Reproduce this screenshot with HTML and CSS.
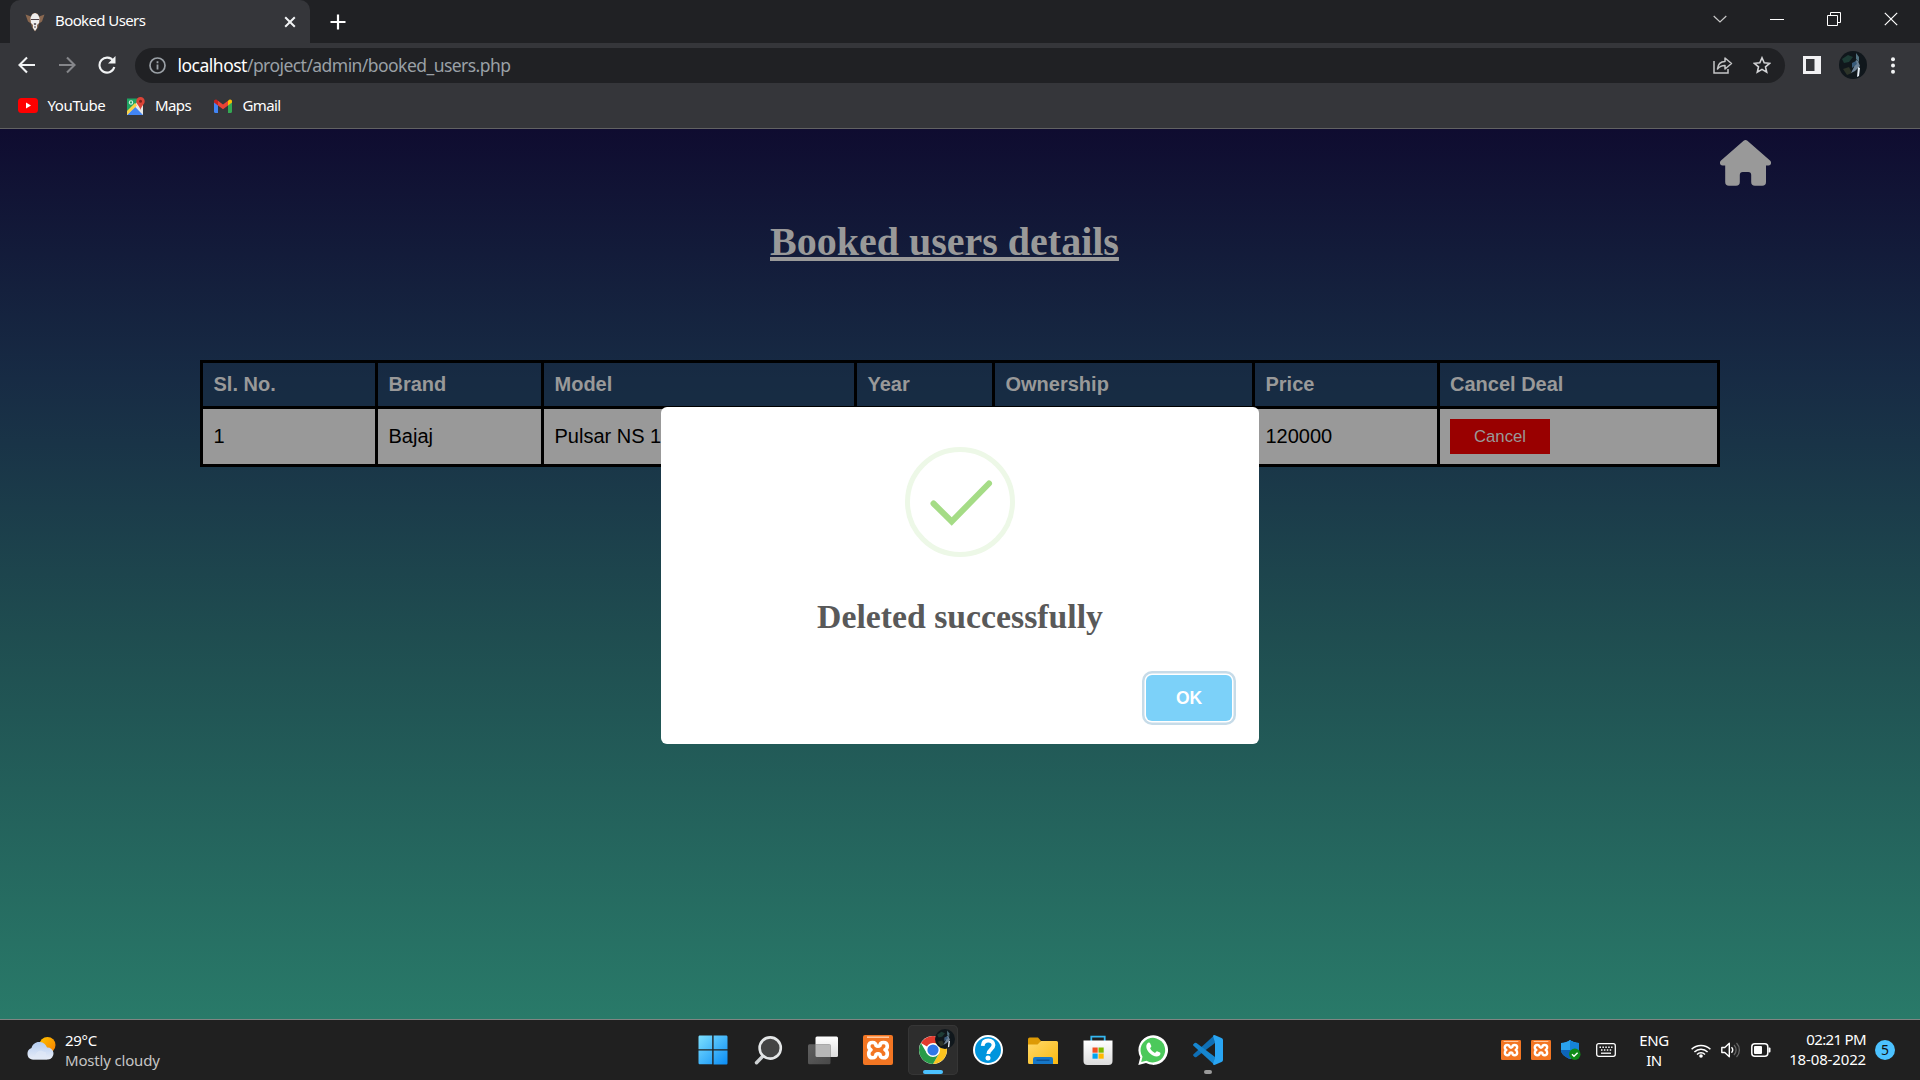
FILE: index.html
```html
<!DOCTYPE html>
<html lang="en">
<head>
<meta charset="utf-8">
<title>Booked Users</title>
<link rel="stylesheet" href="styles.css">
</head>
<body>
<svg width="0" height="0" class="defs">
  <defs>
    <linearGradient id="win" x1="0" y1="0" x2="1" y2="1"><stop offset="0" stop-color="#7de0ff"/><stop offset="1" stop-color="#0a8cf5"/></linearGradient>
    <linearGradient id="fold" x1="0" y1="0" x2="1" y2="1"><stop offset="0" stop-color="#ffd96a"/><stop offset="1" stop-color="#fbb911"/></linearGradient>
    <linearGradient id="cloud" x1="0" y1="0" x2="0" y2="1"><stop offset="0" stop-color="#b4cdf2"/><stop offset="1" stop-color="#e8edf7"/></linearGradient>
    <linearGradient id="sun" x1="0" y1="0" x2="1" y2="1"><stop offset="0" stop-color="#ffc400"/><stop offset="1" stop-color="#f57c00"/></linearGradient>
    <linearGradient id="grey" x1="0" y1="0" x2="1" y2="1"><stop offset="0" stop-color="#606060"/><stop offset="1" stop-color="#484848"/></linearGradient>
    <linearGradient id="light" x1="0" y1="0" x2="0" y2="1"><stop offset="0" stop-color="#fff"/><stop offset="1" stop-color="#dcdcdc"/></linearGradient>
    <symbol id="xampp" viewBox="0 0 30 30">
      <rect width="30" height="30" rx="2" fill="#f37623"/>
      <path d="M4 2.2h22" stroke="#ffc69c" stroke-width="1.6"/>
      <path d="M9.500 7.500C5 7.500 4.500 13 8 14.800C4.500 17 5 22.800 9.500 22.800C12 22.800 13 21 13 19.500C14 18.600 16 18.600 17 19.500C17 21 18 22.800 20.500 22.800C25 22.800 25.500 17 22 14.800C25.500 13 25 7.500 20.500 7.500C18 7.500 17 9 17 10.500C16 11.500 14 11.500 13 10.500C13 9 12 7.500 9.500 7.500Z" fill="none" stroke="#fff" stroke-width="3.600" stroke-linejoin="round"/>
    </symbol>
    <symbol id="avatar" viewBox="0 0 28 28">
      <circle cx="14" cy="14" r="14" fill="#10171c"/>
      <path d="M3 8l6-4 5 2-4 5-5 1z" fill="#1d3b35"/>
      <path d="M4 18l6-2 3 6-5 2z" fill="#2c3328"/>
      <path d="M17 2l3 4 0 5-3-3z" fill="#52717f"/>
      <path d="M17 9l2 1 2 5-2 2-3 3-4 2 3-6z" fill="#6d8297"/>
      <path d="M19 16l2 1-1 8-2 1z" fill="#e4edf5"/>
      <path d="M13 12l4-2 1 3-5 4z" fill="#385a7a"/>
    </symbol>
  </defs>
</svg>
<div class="screen">
  <header class="browser">
    <div class="tabstrip">
      <div class="tab">
        <svg class="favicon" viewBox="0 0 20 20"><path d="M.5 2.500L6 4.500 8 1h4l2 3.500 5.500-2L17 9.500l-3 2-1 4-3 4-3-4-1-4-3-2z" fill="#8a6850"/><path d="M7 2.500L10 1l3 1.500 1.500 3.500-.5 5-2 2v3l-2 3-2-3v-3l-2-2-.5-5z" fill="#efeeee"/><path d="M6 7.500h8M9 11.500l1 1 1-1M9 15h2" fill="none" stroke="#4c4147" stroke-width="1.200"/></svg>
        <span class="tab-title">Booked Users</span>
        <svg class="tab-close" viewBox="0 0 12 12"><path d="M1.200 1.200l9.600 9.600M10.800 1.200L1.200 10.800" stroke="#f1f3f4" stroke-width="2"/></svg>
      </div>
      <svg class="newtab" viewBox="0 0 16 16"><path d="M8 .5v15M.5 8h15" stroke="#fff" stroke-width="2.200"/></svg>
      <div class="window-buttons">
        <svg viewBox="0 0 14 14"><path d="M.7 4l6.300 6 6.300-6" fill="none" stroke="#c8c8c8" stroke-width="1.200"/></svg>
        <svg viewBox="0 0 14 14"><path d="M0 7.500h14" stroke="#fff"/></svg>
        <svg viewBox="0 0 14 14"><path d="M.5 3.500h10v10h-10zM3.500 3V.5h10v10h-2.500" fill="none" stroke="#fff"/></svg>
        <svg viewBox="0 0 14 14"><path d="M.8.8l12.400 12.400M13.200.8L.8 13.200" stroke="#fff" stroke-width="1.200"/></svg>
      </div>
    </div>
    <div class="toolbar">
      <svg class="nav" viewBox="0 0 18 18"><path d="M17 9H2M9 1.500L1.500 9 9 16.500" fill="none" stroke="#f1f3f4" stroke-width="2.100"/></svg>
      <svg class="nav" viewBox="0 0 18 18"><path d="M1 9h15M9 1.500L16.500 9 9 16.500" fill="none" stroke="#85868a" stroke-width="2.100"/></svg>
      <svg class="nav" viewBox="0 0 18 18"><path d="M15.300 5A7.500 7.500 0 1 0 16.300 11" fill="none" stroke="#f1f3f4" stroke-width="2.100"/><path d="M17.500 0v7.500H10z" fill="#f1f3f4"/></svg>
      <div class="omnibox">
        <svg class="info" viewBox="0 0 17 17"><circle cx="8.500" cy="8.500" r="7.500" fill="none" stroke="#9aa0a6" stroke-width="1.700"/><path d="M8.500 7.500v5M8.500 4.300v2" stroke="#9aa0a6" stroke-width="1.800"/></svg>
        <div class="url"><span class="host">localhost</span><span class="path">/project/admin/booked_users.php</span></div>
        <svg class="share" viewBox="0 0 20 18"><path d="M1 5v12h14v-4" fill="none" stroke="#c4c5c6" stroke-width="1.500"/><path d="M4.500 13C5 8 8 5.500 12 5.500V2l6.500 5.500L12 13V9.500C8.500 9.500 6 11 4.500 13z" fill="none" stroke="#c4c5c6" stroke-width="1.500" stroke-linejoin="round"/></svg>
        <svg class="star" viewBox="0 0 18 18"><path d="M9 1.800l2.200 5 5.400.5-4.100 3.600 1.200 5.300L9 13.400l-4.700 2.800 1.200-5.300L1.400 7.300l5.400-.5z" fill="none" stroke="#d3d4d6" stroke-width="1.600"/></svg>
      </div>
      <svg class="panel" viewBox="0 0 18 18"><path d="M0 0h18v18H0zM3 3v12h8.500V3z" fill="#f1f1f3" fill-rule="evenodd"/></svg>
      <svg class="face"><use href="#avatar"/></svg>
      <svg class="dots" viewBox="0 0 4 17"><g fill="#f1f3f4"><circle cx="2" cy="2.200" r="2"/><circle cx="2" cy="8.500" r="2"/><circle cx="2" cy="14.800" r="2"/></g></svg>
    </div>
    <nav class="bookmarks">
      <svg class="yt" viewBox="0 0 20 15"><rect width="20" height="15" rx="3.500" fill="red"/><path d="M8 4.500l5 3-5 3z" fill="#fff"/></svg>
      <span class="b-yt">YouTube</span>
      <svg class="maps" viewBox="0 0 18 18"><rect y="1.500" width="16" height="16.500" fill="#1fa463"/><path d="M0 18V15L14 1.500h2V18z" fill="#e8e8e6"/><path d="M0 18L8 9.800 16 18z" fill="#4285f4"/><path d="M0 18v-4L8 6l2 2.500z" fill="#fbd147"/><path d="M13.500 0a4.300 4.300 0 0 1 4.200 4.500C17.700 7.300 14.300 9 13.500 13 12.700 9 9.300 7.300 9.300 4.500A4.300 4.300 0 0 1 13.500 0z" fill="#db4437"/><circle cx="13.500" cy="4.300" r="1.500" fill="#7b231d"/><circle cx="4" cy="5.500" r="1.700" fill="none" stroke="#d8efdf" stroke-width="1.100"/></svg>
      <span class="b-maps">Maps</span>
      <svg class="gmail" viewBox="0 0 18 14"><path d="M0 2v10.800c0 .7.500 1.200 1.200 1.200H4V6z" fill="#4285f4"/><path d="M18 2v10.800c0 .7-.5 1.200-1.200 1.200H14V6z" fill="#34a853"/><path d="M4 1.800l5 3.700 5-3.700v4.700l-5 3.700-5-3.700z" fill="#ea4335"/><path d="M14 1.800l1-.8c1.300-1 3-.2 3 1.300v1.200l-4 3z" fill="#fbbc04"/><path d="M4 1.800L3 1C1.700 0 0 .8 0 2.300v1.200l4 3z" fill="#c5221f"/></svg>
      <span class="b-gmail">Gmail</span>
    </nav>
  </header>

  <main class="page">
    <svg class="home" viewBox="0 0 51 46"><path d="M23.600.8a3 3 0 0 1 3.800 0L50 20.500c2 2 1 5-1.500 5H46V42a3.800 3.800 0 0 1-3.800 3.800H35a3.800 3.800 0 0 1-3.800-3.800v-7a3 3 0 0 0-3-3h-5.400a3 3 0 0 0-3 3v7a3.800 3.800 0 0 1-3.800 3.800H9A3.800 3.800 0 0 1 5.200 42V25.500H2.500C0 25.500-1 22.500 1 20.500z" fill="#999"/></svg>
    <h1>Booked users details</h1>
    <div class="table">
      <div class="row head"><div>Sl. No.</div><div>Brand</div><div>Model</div><div>Year</div><div>Ownership</div><div>Price</div><div>Cancel Deal</div></div>
      <div class="row data"><div>1</div><div>Bajaj</div><div>Pulsar NS 1</div><div></div><div></div><div>120000</div><div><button class="cancel">Cancel</button></div></div>
    </div>
    <section class="modal">
      <svg class="success" viewBox="0 0 110 110"><circle cx="55" cy="55" r="52.500" fill="none" stroke="#edf8e7" stroke-width="5"/><path d="M28.500 56.500L46.700 74.500 84 36.500" fill="none" stroke="#a5dc86" stroke-width="6" stroke-linecap="round"/></svg>
      <h2>Deleted successfully</h2>
      <button class="ok">OK</button>
    </section>
  </main>

  <footer class="taskbar">
    <div class="weather">
      <svg viewBox="0 0 30 23"><circle cx="21.500" cy="8" r="8" fill="url(#sun)"/><path d="M6 22.500a6 6 0 0 1-.5-11.500C6.500 7 10 4.500 14 5c3.500.3 6 2.500 7 5.500a6 6 0 0 1 1 12z" fill="url(#cloud)"/><path d="M6 22.500c4 0 2-9 9-9l5 2 1 7z" fill="#dfe8f6" opacity=".7"/></svg>
      <div><div class="temp">29°C</div><div class="sky">Mostly cloudy</div></div>
    </div>
    <div class="apps">
      <div class="app"><svg viewBox="0 0 30 30"><path d="M.5 2C.5 1 1 .5 2 .5h12.200v13.700H.5zM15.600.5H28c1 0 1.500.5 1.500 1.500v12.200H15.600zM.5 15.600h13.700v13.700H2c-1 0-1.500-.5-1.500-1.500zM15.600 15.600h13.900V28c0 1-.5 1.500-1.500 1.500H15.600z" fill="url(#win)"/></svg></div>
      <div class="app"><svg viewBox="0 0 30 30"><path d="M10.500 20.500L3.500 27.700" stroke="#cfd2d4" stroke-width="3.400" stroke-linecap="round"/><circle cx="17.200" cy="13" r="10.600" fill="#444" stroke="#e4e6e7" stroke-width="2.600"/></svg></div>
      <div class="app"><svg viewBox="0 0 30 30"><rect x="7.500" y="1.500" width="22.500" height="20.500" rx="1.500" fill="url(#light)"/><rect x="0" y="9.300" width="22.500" height="20" rx="1.500" fill="url(#grey)"/><path d="M7.500 9.300h15V22h-13.500q-1.500 0-1.500-1.500z" fill="#b8b8b8"/></svg></div>
      <div class="app"><svg><use href="#xampp"/></svg></div>
      <div class="app active"><svg class="chrome" viewBox="0 0 28 28"><circle cx="14" cy="14" r="14" fill="#fff"/><path d="M14 14L1.900 7A14 14 0 0 1 26.100 7z" fill="#e33b2e"/><path d="M14 7h12.100A14 14 0 0 1 14 28l6-10.500z" fill="#fcc31e"/><path d="M1.900 7A14 14 0 0 0 14 28l6-10.500H8z" fill="#289b48"/><circle cx="14" cy="14" r="7" fill="#fff"/><circle cx="14" cy="14" r="5.600" fill="#2f77e8"/></svg><svg class="badge" viewBox="0 0 28 28"><use href="#avatar"/></svg><i></i></div>
      <div class="app"><svg viewBox="0 0 30 30"><circle cx="15" cy="15" r="14" fill="#0095dd" stroke="#fff" stroke-width="2"/><path d="M9.700 10.800c.2-3.600 2.500-5.300 5.600-5.300 3.200 0 5.200 1.800 5.200 4.600 0 4.300-5.200 4.300-5.200 9" fill="none" stroke="#fff" stroke-width="3.800"/><circle cx="15" cy="23" r="2.500" fill="#fff"/></svg></div>
      <div class="app"><svg viewBox="0 0 30 30"><path d="M0 4.200Q0 2.500 1.700 2.500H10l3 3.500-2 4H0z" fill="#dd9a05"/><path d="M0 9.500h9.500L13 6h15.500Q30 6 30 7.500V29H1.500Q0 29 0 27.500z" fill="url(#fold)"/><path d="M5 29v-5q0-2 2-2h16q2 0 2 2v5z" fill="#1677c8"/><path d="M8.500 25.200h13" stroke="#0a4a8a" stroke-width="1.200"/></svg></div>
      <div class="app"><svg viewBox="0 0 30 30"><path d="M8.300 7V1.700h13.400V7" fill="none" stroke="#35b8f1" stroke-width="1.800"/><path d="M.5 5.500h29V26q0 4-4 4h-21q-4 0-4-4z" fill="url(#light)"/><path d="M9.500 12.500h5.200v5.200H9.500z" fill="#f25022"/><path d="M15.500 12.500h5.200v5.200h-5.200z" fill="#7fba00"/><path d="M9.500 18.500h5.200v5.200H9.500z" fill="#00a4ef"/><path d="M15.500 18.500h5.200v5.200h-5.200z" fill="#ffb900"/></svg></div>
      <div class="app"><svg viewBox="0 0 30 30"><path d="M.3 30l2-7.700A14.800 14.800 0 1 1 8 28z" fill="#fff"/><path d="M3.200 27l1.300-5.200a12.300 12.300 0 1 1 4 3.900z" fill="#4bc95b"/><path d="M9.500 8.300c.8-1 2.200-1 2.600 0l1.200 2.800c.2.800-1 1.800-1.200 2.200 1 2.200 2.700 3.700 4.900 4.600.7-.4 1.300-1.900 2.100-1.700l2.900 1.400c.8.500.4 2.200-.5 3-3 2.300-7 .3-9.700-2.300-2.700-2.700-5-6.900-2.300-10z" fill="#fff"/></svg></div>
      <div class="app idle"><svg viewBox="0 0 30 30"><path d="M22 8L3.500 22Q2.500 22.700 1.600 22L.4 20.800Q-.3 20 .5 19.200L21 .5z" fill="#0f6fb5"/><path d="M22 22L3.500 8Q2.500 7.300 1.600 8L.4 9.200Q-.3 10 .5 10.800L21 29.500z" fill="#1686d0"/><path d="M21.500 0L28.500 3Q30 3.700 30 5v20q0 1.300-1.500 2L21.500 30q-1 0-1.500-.8L22 22V8L20 .8Q20.500 0 21.500 0z" fill="#29a5f3"/></svg><i></i></div>
    </div>
    <div class="tray">
      <svg class="t20"><use href="#xampp"/></svg>
      <svg class="t20"><use href="#xampp"/></svg>
      <svg class="t20" viewBox="0 0 20 20"><path d="M9 0Q12 2.500 18 3v7c0 4-4 7-9 9-5-2-9-5-9-9V3Q6 2.500 9 0z" fill="#1b8fe0"/><path d="M9 0Q12 2.500 18 3v7H0V3Q6 2.500 9 0z" fill="#2aa3ee"/><path d="M9 0Q12 2.500 18 3v7H9z" fill="#1583d8"/><path d="M0 10h9v9c-5-2-9-5-9-9z" fill="#0e64b8"/><circle cx="13.800" cy="14.300" r="5.700" fill="#0f8a17"/><path d="M11 14.300l2 2 3.600-3.600" fill="none" stroke="#fff" stroke-width="1.400"/></svg>
      <svg class="kbd" viewBox="0 0 20 14"><rect x=".7" y=".7" width="18.600" height="12.600" rx="2" fill="none" stroke="#fff" stroke-width="1.300"/><path d="M3.500 4.300h13M5 7h11" stroke="#fff" stroke-width="1.400" stroke-dasharray="1.500 1.400"/><path d="M5 10.200h10" stroke="#fff" stroke-width="1.300"/></svg>
      <div class="lang">ENG<br>IN</div>
      <svg class="wifi" viewBox="0 0 20 15"><g fill="none" stroke="#fff" stroke-width="1.500"><path d="M.6 6.300a13.300 13.300 0 0 1 18.800 0M3.400 9a9.300 9.300 0 0 1 13.200 0M6 11.500a5.600 5.600 0 0 1 8 0"/></g><circle cx="10" cy="13" r="1.800" fill="#fff"/></svg>
      <svg class="vol" viewBox="0 0 20 16"><path d="M.8 5.500h3L8.300 1.300v13.400L3.800 10.500h-3z" fill="none" stroke="#fff" stroke-width="1.400" stroke-linejoin="round"/><path d="M10.500 5.300a4 4 0 0 1 0 5.400" fill="none" stroke="#fff" stroke-width="1.400"/><path d="M13 3a7 7 0 0 1 0 10M15.500 1a10 10 0 0 1 0 14" fill="none" stroke="#666" stroke-width="1.300"/></svg>
      <svg class="bat" viewBox="0 0 20 14"><rect x=".8" y=".8" width="16" height="12.400" rx="3" fill="none" stroke="#fff" stroke-width="1.500"/><rect x="3" y="3" width="8" height="8" rx="1" fill="#fff"/><path d="M17.500 4.500h1q1 0 1 1v3q0 1-1 1h-1z" fill="#fff"/></svg>
      <div class="clock"><span class="time">02:21 PM</span><br><span class="date">18-08-2022</span></div>
      <div class="count">5</div>
    </div>
  </footer>
</div>
</body>
</html>
```
FILE: styles.css
```css
* { box-sizing: border-box; }
body { margin: 0; font-family: "Noto Sans", sans-serif; overflow: hidden; }
svg { display: block; flex: none; }
.defs { position: absolute; }
.screen { width: 1920px; height: 1080px; display: flex; flex-direction: column; }

.browser { height: 129px; background: #35363a; border-bottom: 1px solid #626262; color: #fff; }
.tabstrip { height: 43px; background: #202124; display: flex; align-items: center; padding-left: 10px; }
.tab { width: 300px; height: 43px; background: #35363a; border-radius: 10px 10px 0 0; display: flex; align-items: center; padding: 0 14px 0 15px; font-size: 15px; }
.favicon { width: 20px; height: 20px; margin-right: 10px; }
.tab-title { flex: 1; letter-spacing: -.6px; line-height: 20px; padding-bottom: 4px; }
.tab-close { width: 12px; height: 12px; }
.newtab { width: 16px; height: 16px; margin-left: 19.500px; }
.window-buttons { margin-left: auto; display: flex; gap: 43px; padding-right: 22px; margin-top: -6px; }
.window-buttons svg { width: 14px; height: 14px; }

.toolbar { height: 44px; display: flex; align-items: center; padding: 0 24px 0 18px; }
.nav { width: 18px; height: 18px; margin-right: 22px; }
.omnibox { width: 1650px; height: 35px; margin-left: -3px; background: #202124; border-radius: 18px; display: flex; align-items: center; padding: 0 14px; }
.info { width: 17px; height: 17px; margin-right: 11.500px; }
.url { flex: 1; font-size: 17.500px; line-height: 24px; white-space: nowrap; }
.host { letter-spacing: -.5px; }
.path { color: #9aa0a6; letter-spacing: -.55px; }
.share { width: 20px; height: 18px; margin-right: 20px; }
.star { width: 18px; height: 18px; }
.panel { width: 18px; height: 18px; margin-left: 18px; }
.face { width: 28px; height: 28px; margin-left: 18px; }
.dots { width: 4px; height: 17px; margin-left: 24px; }
.bookmarks { height: 37px; display: flex; align-items: center; padding-left: 18px; font-size: 15px; line-height: 20px; }
.bookmarks span { padding-bottom: 2px; }
.yt { width: 20px; height: 15px; margin-right: 9.500px; }
.b-yt { width: 79.500px; letter-spacing: -.4px; }
.maps { width: 18px; height: 18px; margin-right: 10px; }
.b-maps { width: 59px; letter-spacing: -.6px; }
.gmail { width: 18px; height: 14px; margin-right: 10.500px; }
.b-gmail { letter-spacing: -.65px; }

.page { height: 890px; position: relative; background: linear-gradient(#0f0c30, #172b44 28%, #1f4d50 57%, #297a69); display: flex; flex-direction: column; }
.home { width: 51px; height: 46px; margin: 11px 0 0 1720px; }
h1 { margin: 33px 0 0 770px; width: 349px; font: bold 40px/46px "Liberation Serif", serif; color: #999; text-decoration: underline; text-decoration-thickness: 4px; text-underline-offset: 2px; white-space: nowrap; }
.table { margin: 95px 0 0 200px; width: 1520px; border: solid #000; border-width: 3px 0 0 3px; font: 20px/23px "Liberation Sans", sans-serif; color: #000; }
.row { display: grid; grid-template-columns: 175px 166px 313px 138px 260px 185px 280px; }
.row > div { border: solid #000; border-width: 0 3px 3px 0; padding-left: 10.500px; display: flex; align-items: center; }
.row > div:last-child { padding-left: 10px; }
.head { height: 46px; font-weight: bold; color: #999; background: rgba(23, 43, 66, .6); }
.data { height: 58px; }
.data > div { background: #999; }
.cancel { width: 100px; height: 35px; border: 0; padding: 0; background: #900; color: #999; font: 16.700px "Liberation Sans", sans-serif; }

.modal { position: absolute; left: 661px; top: 278px; width: 598px; height: 337px; background: #fff; border-radius: 6px; padding: 40px 27px 0; display: flex; flex-direction: column; align-items: center; }
.success { width: 110px; height: 110px; }
h2 { margin: 40px 0 0; font: bold 33.750px/40px "Liberation Serif", serif; color: #595959; white-space: nowrap; }
.ok { align-self: flex-end; margin-top: 38px; width: 86px; height: 46px; border: 0; border-radius: 6px; padding: 1px 0 0; background: #7cd1f9; color: #fff; font: bold 17.500px "Liberation Sans", sans-serif; box-shadow: 0 0 0 1.500px #fff, 0 0 0 4px #c6dbe8; }

.taskbar { height: 61px; background: #202020; border-top: 1px solid #818583; color: #fff; display: grid; grid-template-columns: 690px 1fr 440px; }
.weather { display: flex; padding: 6px 0 0 26px; }
.weather svg { width: 30px; height: 23px; margin: 11px 9px 0 0; }
.weather > div { font-size: 15px; line-height: 20px; padding-top: 4px; }
.temp { letter-spacing: -.3px; }
.sky { color: #c5c5c5; letter-spacing: -.18px; }
.apps { display: flex; gap: 5px; padding-top: 5px; margin-left: -2px; }
.app { width: 50px; height: 50px; padding: 10px; position: relative; border-radius: 5px; }
.app svg { width: 30px; height: 30px; }
.active { background: #2d2d2d; box-shadow: inset 0 0 0 1px #363636; }
.active .chrome { width: 28px; height: 28px; margin: 1px; }
.active .badge { position: absolute; right: 3px; top: 4px; width: 20px; height: 20px; }
.app i { position: absolute; bottom: 1px; left: 15px; width: 20px; height: 4px; border-radius: 2px; background: #4cc2ff; }
.idle i { left: 21px; width: 8px; background: #9a9a9a; }
.tray { display: flex; align-items: center; padding-left: 21px; font-size: 15px; line-height: 20px; }
.t20 { width: 20px; height: 20px; margin-right: 10px; }
.kbd { width: 20px; height: 14px; margin-left: 5px; }
.lang { width: 34px; margin-left: 21px; text-align: center; letter-spacing: -.4px; }
.wifi { width: 20px; height: 15px; margin-left: 20px; }
.vol { width: 20px; height: 16px; margin-left: 10px; }
.bat { width: 20px; height: 14px; margin-left: 10px; }
.clock { width: 95px; text-align: right; white-space: nowrap; padding-bottom: 2px; }
.time { letter-spacing: -.65px; }
.date { letter-spacing: -.15px; }
.count { width: 20px; height: 20px; border-radius: 50%; margin-left: 9px; background: #4cc2ff; color: #111; text-align: center; font-size: 14px; }
```
